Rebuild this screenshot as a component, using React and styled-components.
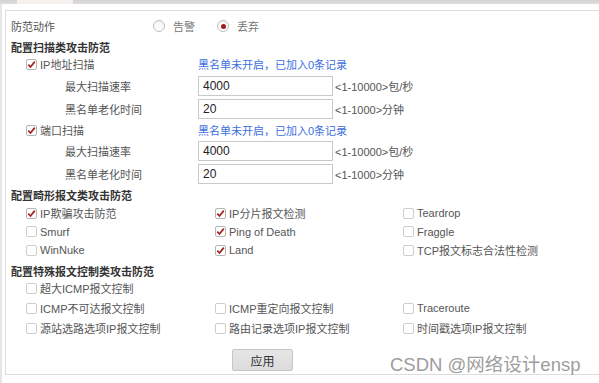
import React from 'react';
import styled, { createGlobalStyle } from 'styled-components';

// //////////////// GLOBAL //////////////// //
const GlobalStyle = createGlobalStyle`
  html, body {
    margin: 0;
    padding: 0;
    background: #fff;
  }
  body {
    font-family: "Liberation Sans", "Noto Sans CJK SC", sans-serif;
    font-size: 11px;
    color: #555;
  }
`;

// //////////////// FRAME //////////////// //
const Page = styled.div`
  position: relative;
  width: 599px;
  height: 383px;
  overflow: hidden;
  display: flex;
  flex-direction: column;
`;

const TopBar = styled.div`
  height: 4px;
  flex: none;
  display: flex;
  background: linear-gradient(#d2d2d2, #dedede);
`;

const Tab = styled.div`
  margin-left: 17px;
  width: 56px;
  background: #f6f1ef;
`;

const Body = styled.div`
  flex: 1;
  display: flex;
`;

const LeftStrip = styled.div`
  width: 2px;
  background: #e6e6e6;
`;

const Panel = styled.div`
  margin: 6px 0 0 3px;
  height: 365px;
  box-sizing: border-box;
  flex: 1;
  border: 1px solid #dcdcdc;
  border-right: none;
  padding: 7px 0 0 5px;
  display: flex;
  flex-direction: column;
`;

// //////////////// ROWS //////////////// //
const ActionRow = styled.div`
  height: 16px;
  display: flex;
  align-items: center;
`;

const ActionLabel = styled.div`
  width: 142px;
`;

const RadioOption = styled.label`
  width: 64px;
  display: flex;
  align-items: center;
  gap: 8px;
  font-family: "Liberation Serif", "Noto Sans CJK SC", serif;
  color: #777;
`;

const RadioCircle = styled.span`
  width: 12px;
  height: 12px;
  box-sizing: border-box;
  border-radius: 50%;
  border: 1px solid #bdbdbd;
  background: linear-gradient(#f4f4f4, #fff);
  display: flex;
  align-items: center;
  justify-content: center;
  &::after {
    content: '';
    width: 5px;
    height: 5px;
    border-radius: 50%;
    background: ${(p) => (p.checked ? '#a11b1b' : 'transparent')};
  }
`;

const Title = styled.div`
  height: 16px;
  margin-top: ${(p) => p.top || 0}px;
  line-height: 16px;
  font-weight: bold;
  color: #333;
`;

const CheckRow = styled.div`
  height: 16px;
  margin-top: ${(p) => p.top || 0}px;
  padding-left: 15px;
  display: grid;
  grid-template-columns: 172px 1fr;
  align-items: center;
`;

const Note = styled.span`
  color: #3d6fe0;
`;

const FieldRow = styled.div`
  height: 20px;
  margin-top: ${(p) => p.top || 0}px;
  padding-left: 54px;
  display: grid;
  grid-template-columns: 133px 135px auto;
  align-items: center;
`;

const Input = styled.input`
  height: 20px;
  width: 135px;
  box-sizing: border-box;
  border: 1px solid #c9c9c9;
  padding: 0 4px;
  font-family: "Liberation Sans", sans-serif;
  font-size: 12px;
  color: #222;
  outline: none;
`;

const Unit = styled.span`
  padding-left: 2px;
`;

const OptionGrid = styled.div`
  margin-top: ${(p) => p.top || 0}px;
  padding-left: 15px;
  display: grid;
  grid-template-columns: 189px 188px 1fr;
  grid-auto-rows: 16px;
  row-gap: ${(p) => p.gap}px;
  align-items: center;
`;

const CheckItem = styled.label`
  display: flex;
  align-items: center;
  gap: 3px;
  white-space: nowrap;
`;

const Box = styled.span`
  width: 11px;
  height: 11px;
  flex: none;
  box-sizing: border-box;
  border: 1px solid ${(p) => (p.checked ? '#b5b5b5' : '#cdcdcd')};
  border-radius: 2px;
  background: #fff;
  display: flex;
  align-items: center;
  justify-content: center;
`;

const ButtonRow = styled.div`
  margin-top: 13px;
  padding-left: 221px;
`;

const Button = styled.button`
  width: 61px;
  height: 22px;
  border: 1px solid #c6c6c6;
  border-radius: 2px;
  background: linear-gradient(#e6e6e6, #dcdcdc);
  font-family: "Liberation Sans", "Noto Sans CJK SC", sans-serif;
  font-size: 12px;
  color: #333;
  padding: 0;
`;

const Watermark = styled.div`
  position: absolute;
  left: 390px;
  top: 350px;
  font-family: "Liberation Sans", "Noto Sans CJK SC", sans-serif;
  font-size: 18.5px;
  color: #9d9d9d;
  white-space: nowrap;
`;

// //////////////// PARTS //////////////// //
const Check = ({ checked, label }) => (
  <CheckItem>
    <Box checked={checked}>
      {checked && (
        <svg width="9" height="9" viewBox="0 0 9 9">
          <path d="M1.3 4.6 L3.5 7 L7.8 1.6" fill="none" stroke="#a32222" strokeWidth="1.7" />
        </svg>
      )}
    </Box>
    {label}
  </CheckItem>
);

const malformed = [
  { label: 'IP欺骗攻击防范', checked: true },
  { label: 'IP分片报文检测', checked: true },
  { label: 'Teardrop', checked: false },
  { label: 'Smurf', checked: false },
  { label: 'Ping of Death', checked: true },
  { label: 'Fraggle', checked: false },
  { label: 'WinNuke', checked: false },
  { label: 'Land', checked: true },
  { label: 'TCP报文标志合法性检测', checked: false },
];

const special = [
  { label: '超大ICMP报文控制' },
  null,
  null,
  { label: 'ICMP不可达报文控制' },
  { label: 'ICMP重定向报文控制' },
  { label: 'Traceroute' },
  { label: '源站选路选项IP报文控制' },
  { label: '路由记录选项IP报文控制' },
  { label: '时间戳选项IP报文控制' },
];

// //////////////// MAIN COMPONENT //////////////// //
const App = () => (
  <Page>
    <GlobalStyle />
    <TopBar>
      <Tab />
    </TopBar>
    <Body>
      <LeftStrip />
      <Panel>
        <ActionRow>
          <ActionLabel>防范动作</ActionLabel>
          <RadioOption>
            <RadioCircle />
            告警
          </RadioOption>
          <RadioOption>
            <RadioCircle checked />
            丢弃
          </RadioOption>
        </ActionRow>

        <Title top={6}>配置扫描类攻击防范</Title>
        <CheckRow>
          <Check checked label="IP地址扫描" />
          <Note>黑名单未开启，已加入0条记录</Note>
        </CheckRow>
        <FieldRow top={4}>
          <span>最大扫描速率</span>
          <Input defaultValue="4000" />
          <Unit>&lt;1-10000&gt;包/秒</Unit>
        </FieldRow>
        <FieldRow top={3}>
          <span>黑名单老化时间</span>
          <Input defaultValue="20" />
          <Unit>&lt;1-1000&gt;分钟</Unit>
        </FieldRow>
        <CheckRow top={3}>
          <Check checked label="端口扫描" />
          <Note>黑名单未开启，已加入0条记录</Note>
        </CheckRow>
        <FieldRow top={3}>
          <span>最大扫描速率</span>
          <Input defaultValue="4000" />
          <Unit>&lt;1-10000&gt;包/秒</Unit>
        </FieldRow>
        <FieldRow top={3}>
          <span>黑名单老化时间</span>
          <Input defaultValue="20" />
          <Unit>&lt;1-1000&gt;分钟</Unit>
        </FieldRow>

        <Title top={4}>配置畸形报文类攻击防范</Title>
        <OptionGrid top={1} gap={2.5}>
          {malformed.map((item) => (
            <Check key={item.label} checked={item.checked} label={item.label} />
          ))}
        </OptionGrid>

        <Title top={6}>配置特殊报文控制类攻击防范</Title>
        <OptionGrid gap={4}>
          {special.map((item, i) => (item ? <Check key={item.label} label={item.label} /> : <span key={i} />))}
        </OptionGrid>

        <ButtonRow>
          <Button>应用</Button>
        </ButtonRow>
      </Panel>
    </Body>
    <Watermark>CSDN @网络设计ensp</Watermark>
  </Page>
);

export default App;
